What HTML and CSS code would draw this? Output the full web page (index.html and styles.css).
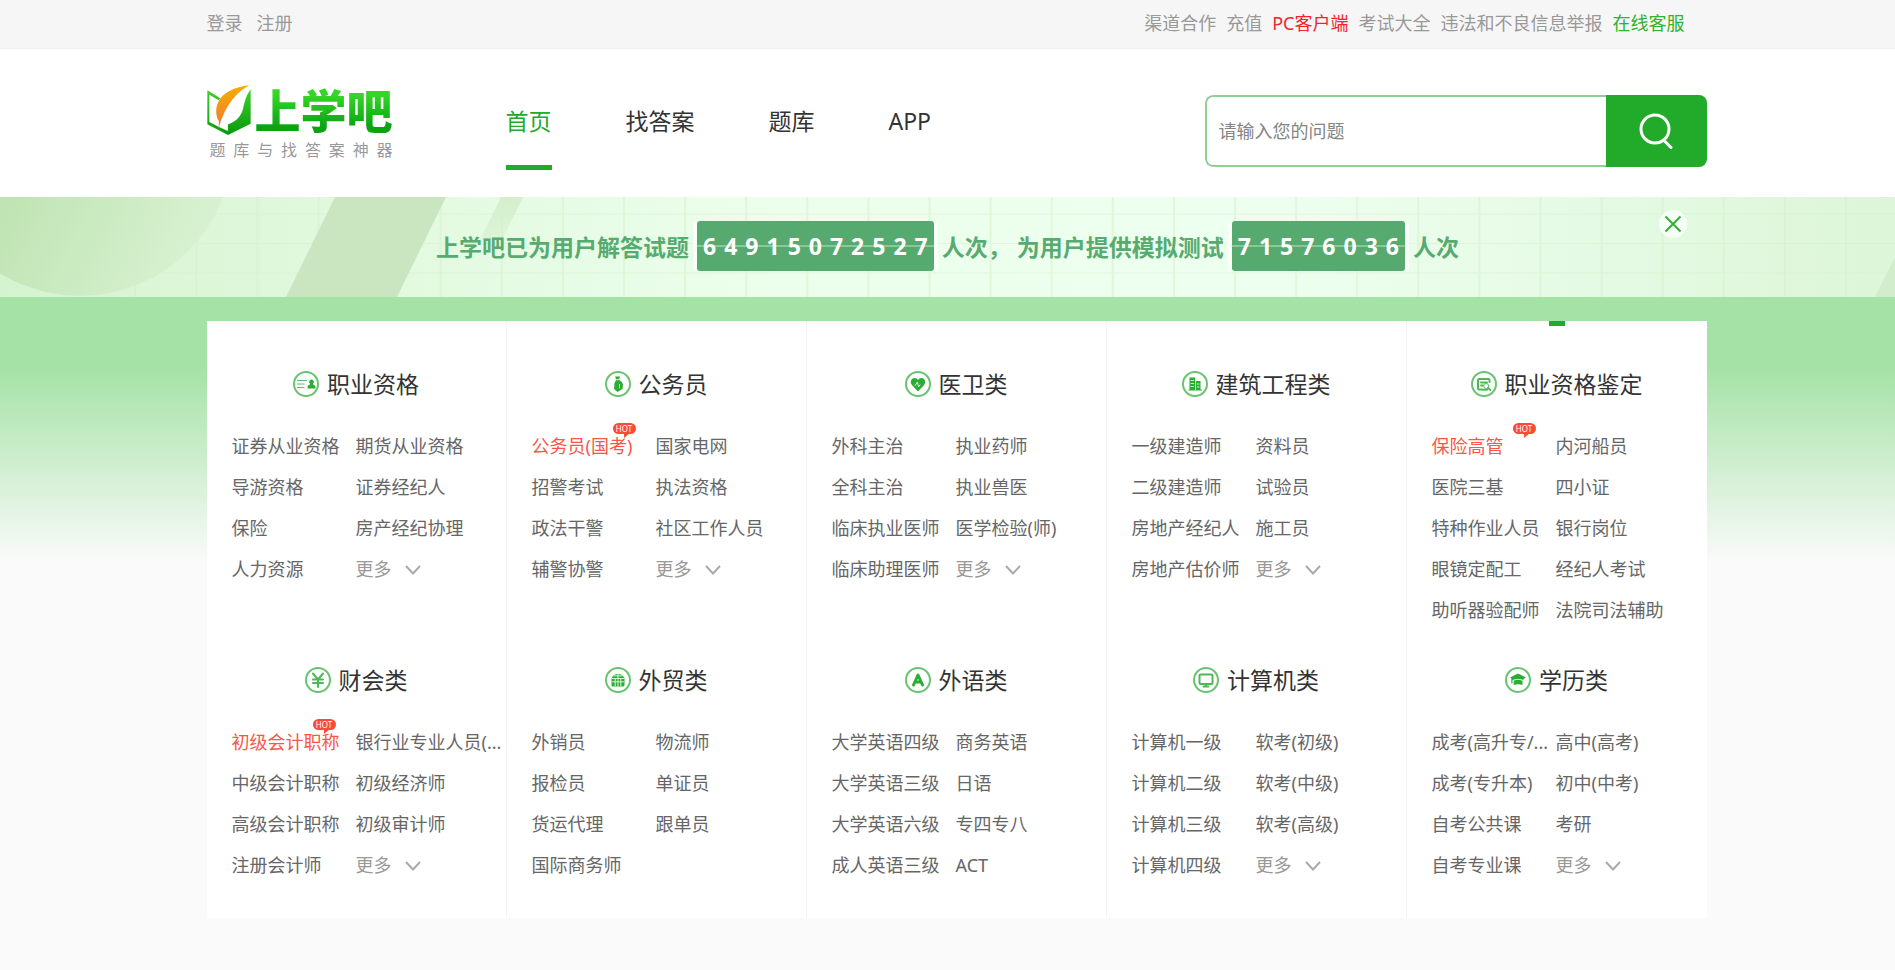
FILE: index.html
```html
<!DOCTYPE html>
<html lang="zh-CN">
<head>
<meta charset="utf-8">
<title>上学吧 - 题库与找答案神器</title>
<meta name="viewport" content="width=device-width, initial-scale=1">
<link rel="stylesheet" href="styles.css">
</head>
<body>
<div class="topbar">
  <div class="container topbar-inner">
    <nav class="top-links top-account" aria-label="账号">
      <a href="#">登录</a><a href="#">注册</a>
    </nav>
    <nav class="top-links" aria-label="服务">
      <a href="#">渠道合作</a><a href="#">充值</a><a href="#" class="is-red">PC客户端</a><a href="#">考试大全</a><a href="#">违法和不良信息举报</a><a href="#" class="is-green">在线客服</a>
    </nav>
  </div>
</div>

<header class="header">
  <div class="container header-inner">
    <a href="#" class="logo">
      <span class="logo-top">
        <svg class="logo-mark" viewBox="0 0 132 150" aria-hidden="true">
          <defs>
            <linearGradient id="leafGreen" x1="0" y1="0" x2="0" y2="1"><stop offset="0" stop-color="#3fd02c"/><stop offset="1" stop-color="#079a0c"/></linearGradient>
            <linearGradient id="leafOrange" x1="0" y1="0" x2="0" y2="1"><stop offset="0" stop-color="#f5ae00"/><stop offset="1" stop-color="#ee7a35"/></linearGradient>
          </defs>
          <path d="M1 16 40 40 35 46 7 29V111L36 126 63 138V150L1 118Z" fill="url(#leafGreen)"/>
          <path d="M131 13V116L63 150V118C88 109 101 95 108 72 113 47 119 30 131 13Z" fill="url(#leafGreen)"/>
          <path d="M127 1C83 5 47 24 34 50 23 74 28 96 36 109L35 131C44 99 54 72 77 43 92 24 107 13 127 1Z" fill="url(#leafOrange)"/>
        </svg>
        <span class="logo-name">上学吧</span>
      </span>
      <span class="logo-slogan">题库与找答案神器</span>
    </a>
    <nav class="main-nav" aria-label="主导航">
      <a href="#" class="is-current" aria-current="page">首页</a><a href="#">找答案</a><a href="#">题库</a><a href="#">APP</a>
    </nav>
    <form class="search" action="#">
      <input class="search-input" type="text" placeholder="请输入您的问题" aria-label="请输入您的问题">
      <button class="search-button" type="submit" aria-label="搜索">
        <svg viewBox="0 0 36 36" aria-hidden="true"><circle cx="17" cy="16" r="14"/><path d="M26 27.500 33 34.500"/></svg>
      </button>
    </form>
  </div>
</header>

<section class="banner">
  <svg class="banner-art" viewBox="0 0 1895 100" preserveAspectRatio="xMidYMid slice" aria-hidden="true">
    <defs>
      <linearGradient id="bannerBase"><stop offset="0" stop-color="#d6f3d0"/><stop offset=".2" stop-color="#e2f9df"/><stop offset=".42" stop-color="#ecffec"/><stop offset=".68" stop-color="#edffef"/><stop offset="1" stop-color="#ddf5d8"/></linearGradient>
      <linearGradient id="bannerDisc" gradientUnits="userSpaceOnUse" x1="20" y1="0" x2="190" y2="90"><stop offset="0" stop-color="#bfe3b2"/><stop offset="1" stop-color="#d8f2d2"/></linearGradient>
      <linearGradient id="bannerFade" x1="0" y1="0" x2="0" y2="1"><stop offset="0" stop-color="#d3efcc"/><stop offset="1" stop-color="#d3efcc" stop-opacity=".5"/></linearGradient>
      <pattern id="bannerGrid" patternUnits="userSpaceOnUse" x="12" y="-13" width="61.100" height="29.500"><path d="M0 0H61.100M1 0V29.500" fill="none" stroke="#d2efc9" stroke-width="2" opacity=".5"/></pattern>
    </defs>
    <rect width="1895" height="100" fill="url(#bannerBase)"/>
    <rect x="130" width="1765" height="100" fill="url(#bannerGrid)"/>
    <circle cx="80" cy="-54" r="153" fill="url(#bannerDisc)" opacity=".92"/>
    <path d="M335 0H446L397 100H286Z" fill="#cae6c1"/>
    <path d="M501 0H523L502 43H480Z" fill="url(#bannerFade)"/>
    <path d="M1895 60V100H1875Z" fill="#d1edcb"/>
  </svg>
  <p class="banner-text">
    <span>上学吧已为用户解答试题</span>
    <span class="counter"><b>6</b><b>4</b><b>9</b><b>1</b><b>5</b><b>0</b><b>7</b><b>2</b><b>5</b><b>2</b><b>7</b></span>
    <span>人次， 为用户提供模拟测试</span>
    <span class="counter"><b>7</b><b>1</b><b>5</b><b>7</b><b>6</b><b>0</b><b>3</b><b>6</b></span>
    <span>人次</span>
  </p>
  <div class="container banner-tools">
    <button class="banner-close" type="button" aria-label="关闭"><svg viewBox="0 0 18 18" aria-hidden="true"><path d="M1.500 1.500 16.500 16.500M16.500 1.500 1.500 16.500"/></svg></button>
  </div>
</section>

<main class="stage">
  <div class="container panel">

    <section class="category">
      <h2><svg class="icon" viewBox="0 0 26 26" aria-hidden="true"><circle class="ring" cx="13" cy="13" r="12"/><path class="thin" d="M4.500 9.500H13.500M4.500 13H11M4.500 16.500H11"/><path class="solid" d="M18.500 8.500a2.300 2.300 0 0 1 1.500 4.100l.4 1.200q2.100.6 2.100 2V17.500H14.500V15.800q0-1.400 2.100-2l.4-1.200a2.300 2.300 0 0 1 1.500-4.100Z"/></svg>职业资格</h2>
      <ul class="links">
        <li><a href="#">证券从业资格</a></li><li><a href="#">期货从业资格</a></li>
        <li><a href="#">导游资格</a></li><li><a href="#">证券经纪人</a></li>
        <li><a href="#">保险</a></li><li><a href="#">房产经纪协理</a></li>
        <li><a href="#">人力资源</a></li><li><a href="#" class="more">更多<svg viewBox="0 0 16 10" aria-hidden="true"><path d="M1 1 8 8.500 15 1"/></svg></a></li>
      </ul>
    </section>

    <section class="category">
      <h2><svg class="icon" viewBox="0 0 26 26" aria-hidden="true"><circle class="ring" cx="13" cy="13" r="12"/><path class="solid" d="M10 5.500H15L14 8.500Q16.500 10 18 13.500L17.500 18 12.500 21 9 18 9.500 12 11.300 8.500Z"/><path class="cut" d="M10.500 8.700H15M14.500 13.500V17"/></svg>公务员</h2>
      <ul class="links">
        <li><a href="#" class="hot">公务员(国考)</a><span class="badge">HOT</span></li><li><a href="#">国家电网</a></li>
        <li><a href="#">招警考试</a></li><li><a href="#">执法资格</a></li>
        <li><a href="#">政法干警</a></li><li><a href="#">社区工作人员</a></li>
        <li><a href="#">辅警协警</a></li><li><a href="#" class="more">更多<svg viewBox="0 0 16 10" aria-hidden="true"><path d="M1 1 8 8.500 15 1"/></svg></a></li>
      </ul>
    </section>

    <section class="category">
      <h2><svg class="icon" viewBox="0 0 26 26" aria-hidden="true"><circle class="ring" cx="13" cy="13" r="12"/><path class="solid" d="M13 20.500 7.300 14.500C4 10.500 7 7 9.500 7Q12 7 13 9 14 7 16.500 7C19 7 22 10.500 18.700 14.500Z"/><path class="cut" d="M10 14.500 12.500 11 13.500 16 15 14"/></svg>医卫类</h2>
      <ul class="links">
        <li><a href="#">外科主治</a></li><li><a href="#">执业药师</a></li>
        <li><a href="#">全科主治</a></li><li><a href="#">执业兽医</a></li>
        <li><a href="#">临床执业医师</a></li><li><a href="#">医学检验(师)</a></li>
        <li><a href="#">临床助理医师</a></li><li><a href="#" class="more">更多<svg viewBox="0 0 16 10" aria-hidden="true"><path d="M1 1 8 8.500 15 1"/></svg></a></li>
      </ul>
    </section>

    <section class="category">
      <h2><svg class="icon" viewBox="0 0 26 26" aria-hidden="true"><circle class="ring" cx="13" cy="13" r="12"/><path class="solid" d="M7.500 6.500H13V10H18.500V18.500H20V19.500H6.500V18.500H7.500Z"/><path class="cut" d="M13.500 10V18.500M9 9.500H11.500M9 12.500H11.500M9 15.500H11.500M15.300 13H17M15.300 16H17"/></svg>建筑工程类</h2>
      <ul class="links">
        <li><a href="#">一级建造师</a></li><li><a href="#">资料员</a></li>
        <li><a href="#">二级建造师</a></li><li><a href="#">试验员</a></li>
        <li><a href="#">房地产经纪人</a></li><li><a href="#">施工员</a></li>
        <li><a href="#">房地产估价师</a></li><li><a href="#" class="more">更多<svg viewBox="0 0 16 10" aria-hidden="true"><path d="M1 1 8 8.500 15 1"/></svg></a></li>
      </ul>
    </section>

    <section class="category is-marked">
      <h2><svg class="icon" viewBox="0 0 26 26" aria-hidden="true"><circle class="ring" cx="13" cy="13" r="12"/><path class="line" d="M11 18.500H8Q7 18.500 7 17.500V9Q7 8 8 8H17.500Q18.500 8 18.500 9V11M10 11.500H16M10 14.500H12"/><circle class="thin" cx="15.200" cy="15" r="2.500"/><path class="line" d="M17 17 19.500 19M12 18.700H16"/></svg>职业资格鉴定</h2>
      <ul class="links">
        <li><a href="#" class="hot">保险高管</a><span class="badge">HOT</span></li><li><a href="#">内河船员</a></li>
        <li><a href="#">医院三基</a></li><li><a href="#">四小证</a></li>
        <li><a href="#">特种作业人员</a></li><li><a href="#">银行岗位</a></li>
        <li><a href="#">眼镜定配工</a></li><li><a href="#">经纪人考试</a></li>
        <li><a href="#">助听器验配师</a></li><li><a href="#">法院司法辅助</a></li>
      </ul>
    </section>

    <section class="category">
      <h2><svg class="icon" viewBox="0 0 26 26" aria-hidden="true"><circle class="ring" cx="13" cy="13" r="12"/><path class="line" d="M8 6.500 13 12.500 18 6.500M13 12.500V20M8 12.500H18M8 16H18"/></svg>财会类</h2>
      <ul class="links">
        <li><a href="#" class="hot">初级会计职称</a><span class="badge">HOT</span></li><li><a href="#">银行业专业人员(...</a></li>
        <li><a href="#">中级会计职称</a></li><li><a href="#">初级经济师</a></li>
        <li><a href="#">高级会计职称</a></li><li><a href="#">初级审计师</a></li>
        <li><a href="#">注册会计师</a></li><li><a href="#" class="more">更多<svg viewBox="0 0 16 10" aria-hidden="true"><path d="M1 1 8 8.500 15 1"/></svg></a></li>
      </ul>
    </section>

    <section class="category">
      <h2><svg class="icon" viewBox="0 0 26 26" aria-hidden="true"><circle class="ring" cx="13" cy="13" r="12"/><path class="solid" d="M6.500 11.500A7 7 0 0 1 19.500 11.500V18Q19.500 19.500 18 19.500H8Q6.500 19.500 6.500 18Z"/><path class="cut" d="M7 11.500H19M7 14.800H19M10.200 11.500V19M13 6.500V19M15.800 11.500V19M8.800 8.800H17.200"/></svg>外贸类</h2>
      <ul class="links">
        <li><a href="#">外销员</a></li><li><a href="#">物流师</a></li>
        <li><a href="#">报检员</a></li><li><a href="#">单证员</a></li>
        <li><a href="#">货运代理</a></li><li><a href="#">跟单员</a></li>
        <li><a href="#">国际商务师</a></li>
      </ul>
    </section>

    <section class="category">
      <h2><svg class="icon" viewBox="0 0 26 26" aria-hidden="true"><circle class="ring" cx="13" cy="13" r="12"/><path class="heavy" d="M8.500 18 13 8 17.500 18M10 15H16"/></svg>外语类</h2>
      <ul class="links">
        <li><a href="#">大学英语四级</a></li><li><a href="#">商务英语</a></li>
        <li><a href="#">大学英语三级</a></li><li><a href="#">日语</a></li>
        <li><a href="#">大学英语六级</a></li><li><a href="#">专四专八</a></li>
        <li><a href="#">成人英语三级</a></li><li><a href="#">ACT</a></li>
      </ul>
    </section>

    <section class="category">
      <h2><svg class="icon" viewBox="0 0 26 26" aria-hidden="true"><circle class="ring" cx="13" cy="13" r="12"/><rect class="line" x="6.500" y="7.500" width="13" height="9.500" rx="1"/><path class="line" d="M13 17V19M10.500 19.500H15.500"/></svg>计算机类</h2>
      <ul class="links">
        <li><a href="#">计算机一级</a></li><li><a href="#">软考(初级)</a></li>
        <li><a href="#">计算机二级</a></li><li><a href="#">软考(中级)</a></li>
        <li><a href="#">计算机三级</a></li><li><a href="#">软考(高级)</a></li>
        <li><a href="#">计算机四级</a></li><li><a href="#" class="more">更多<svg viewBox="0 0 16 10" aria-hidden="true"><path d="M1 1 8 8.500 15 1"/></svg></a></li>
      </ul>
    </section>

    <section class="category">
      <h2><svg class="icon" viewBox="0 0 26 26" aria-hidden="true"><circle class="ring" cx="13" cy="13" r="12"/><path class="solid" d="M13 6.500 21 10.500 18.500 12V13Q13 10.800 7.500 13V16.500H6.300V11.300L5 10.500ZM8.700 13.700Q13 12 17.500 13.700V18Q13 16.300 8.700 18Z"/></svg>学历类</h2>
      <ul class="links">
        <li><a href="#">成考(高升专/...</a></li><li><a href="#">高中(高考)</a></li>
        <li><a href="#">成考(专升本)</a></li><li><a href="#">初中(中考)</a></li>
        <li><a href="#">自考公共课</a></li><li><a href="#">考研</a></li>
        <li><a href="#">自考专业课</a></li><li><a href="#" class="more">更多<svg viewBox="0 0 16 10" aria-hidden="true"><path d="M1 1 8 8.500 15 1"/></svg></a></li>
      </ul>
    </section>

  </div>
</main>
</body>
</html>
```
FILE: styles.css
```css
* {
  box-sizing: border-box;
}

body {
  margin: 0;
  background: #fafafa;
  color: #333;
  font-family: "Noto Sans", "Noto Sans CJK SC", sans-serif;
  font-size: 18px;
}

a {
  color: inherit;
  text-decoration: none;
}

h2,
p,
ul {
  margin: 0;
  padding: 0;
}

.topbar,
.header,
.stage {
  padding-left: 18px;
}

.container {
  width: 100%;
  max-width: 1500px;
  margin: 0 auto;
}

/* Top bar */
.topbar {
  background: #f6f6f6;
  border-bottom: 1px solid #eee;
}

.topbar-inner {
  display: flex;
  justify-content: space-between;
  padding-right: 22px;
}

.top-links {
  display: flex;
  gap: 10px;
  line-height: 46px;
  height: 48px;
  color: #999;
}

.top-account {
  gap: 14px;
}

.is-red {
  color: #f5222d;
}

.is-green {
  color: #2cb32f;
}

/* Header */
.header {
  background: #fff;
}

.header-inner {
  display: flex;
  align-items: flex-start;
  height: 148px;
}

.logo {
  display: flex;
  flex-direction: column;
  width: 186px;
  padding-top: 36px;
}

.logo-top {
  display: flex;
  align-items: flex-start;
  justify-content: space-between;
  height: 52px;
}

.logo-mark {
  width: 44px;
  height: 50px;
}

.logo-name {
  font-size: 46px;
  font-weight: 900;
  line-height: 50px;
  background: linear-gradient(#36d527 20%, #0aa312 85%);
  -webkit-background-clip: text;
  background-clip: text;
  color: transparent;
}

.logo-slogan {
  padding-left: 3px;
  font-size: 16px;
  line-height: 26px;
  color: #999;
  text-align-last: justify;
}

.main-nav {
  display: flex;
  gap: 74px;
  margin-left: 113px;
  padding-top: 54px;
  font-size: 23px;
  line-height: 36px;
}

.main-nav a {
  padding-bottom: 26px;
  border-bottom: 5px solid transparent;
}

.main-nav .is-current {
  color: #22aa2a;
  border-bottom-color: #22aa2a;
}

.search {
  display: flex;
  width: 502px;
  height: 72px;
  margin-top: 46px;
  margin-left: auto;
  border-radius: 8px;
  overflow: hidden;
}

.search-input {
  flex: 1;
  min-width: 0;
  padding: 0 12px;
  border: 2px solid #8fce94;
  border-right: 0;
  border-radius: 8px 0 0 8px;
  background: #fff;
  font: inherit;
}

.search-input::placeholder {
  color: #858585;
}

.search-button {
  display: grid;
  place-items: center;
  width: 101px;
  border: 0;
  background: #22aa2a;
}

.search-button svg {
  width: 36px;
  height: 36px;
  fill: none;
  stroke: #fff;
  stroke-width: 3;
  stroke-linecap: round;
}

/* Banner */
.banner {
  position: relative;
  height: 100px;
  overflow: hidden;
  background: #eaffea;
}

.banner-art {
  position: absolute;
  inset: 0;
  width: 100%;
  height: 100%;
}

.banner-text {
  position: relative;
  display: flex;
  align-items: center;
  justify-content: center;
  gap: 8px;
  height: 98px;
  font-size: 23px;
  font-weight: 700;
  color: #58ab70;
  white-space: pre;
}

.counter {
  display: flex;
  gap: 8px;
  padding: 0 6px;
  border-radius: 3px;
  line-height: 50px;
  color: #fff;
  background: linear-gradient(#57aa6f 24px, #86ca96 24px, #86ca96 26px, #57aa6f 26px);
  box-shadow: 4px 0 #f7fff8, -4px 0 #f7fff8;
}

.counter b {
  font-weight: 700;
}

.banner-tools {
  position: absolute;
  inset: 0;
  left: 18px;
  pointer-events: none;
}

.banner-close {
  position: absolute;
  top: 13px;
  right: 20px;
  display: grid;
  place-items: center;
  width: 28px;
  height: 28px;
  padding: 0;
  border: 0;
  border-radius: 50%;
  background: #f6fff6;
  pointer-events: auto;
}

.banner-close svg {
  width: 18px;
  height: 18px;
  fill: none;
  stroke: #35ad3a;
  stroke-width: 2;
}

/* Categories */
.stage {
  padding-top: 24px;
  padding-bottom: 52px;
  background: linear-gradient(#a5e2a6 70px, #fafafa 265px);
}

.panel {
  display: grid;
  grid-template-columns: repeat(5, 1fr);
  background: #fff;
}

.category {
  position: relative;
  min-width: 0;
  padding: 31px 0 32px;
  border-right: 1px solid #f5f5f5;
}

.category:nth-child(-n+5) {
  padding-top: 45px;
  padding-bottom: 0;
}

.category:nth-child(5n) {
  border-right: 0;
}

.is-marked::before {
  content: "";
  position: absolute;
  top: 0;
  left: 50%;
  width: 16px;
  height: 5px;
  margin-left: -8px;
  background: #22aa2a;
}

.category h2 {
  display: flex;
  align-items: center;
  justify-content: center;
  gap: 8px;
  margin-bottom: 24px;
  font-size: 23px;
  font-weight: 400;
  line-height: 36px;
}

.icon {
  width: 26px;
  height: 26px;
  fill: none;
  stroke: #2bad34;
  stroke-linecap: round;
  stroke-linejoin: round;
}

.ring {
  stroke: #69c36f;
  stroke-width: 2;
}

.thin {
  stroke: #5fbf66;
  stroke-width: 1;
}

.line {
  stroke-width: 2;
  stroke: #4db855;
}

.heavy {
  stroke-width: 3;
}

.solid {
  fill: #2bad34;
  stroke: none;
}

.cut {
  stroke: #d9f2da;
  stroke-width: 1;
}

.links {
  display: grid;
  grid-template-columns: 124px minmax(0, 1fr);
  padding-left: 25px;
  list-style: none;
  line-height: 41px;
  color: #666;
}

.links li {
  position: relative;
  min-width: 0;
  height: 41px;
}

.links li:nth-child(odd) {
  padding-right: 6px;
}

.links a {
  display: block;
  white-space: nowrap;
}

.links .hot {
  color: #fa5549;
}

.links .more {
  display: flex;
  align-items: center;
  gap: 13px;
  color: #999;
}

.more svg {
  width: 16px;
  height: 10px;
  fill: none;
  stroke: #aaa;
  stroke-width: 2;
}

.badge {
  position: absolute;
  top: -3px;
  left: 81px;
  width: 23px;
  height: 11px;
  border-radius: 6px;
  background: #f94b36;
  color: #fff;
  font-size: 8px;
  font-weight: 400;
  line-height: 11px;
  text-align: center;
}

.badge::after {
  content: "";
  position: absolute;
  top: 10px;
  left: 11px;
  border-top: 5px solid #f94b36;
  border-right: 6px solid transparent;
}
```
